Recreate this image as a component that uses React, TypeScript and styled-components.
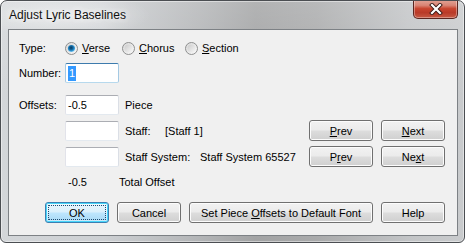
import React, { FC } from 'react';
import styled, { createGlobalStyle, css } from 'styled-components';

const GlobalStyle = createGlobalStyle`
	html, body {
		margin: 0;
		padding: 0;
		background: #ffffff;
	}
	body {
		font-family: 'Liberation Sans', Arial, sans-serif;
		font-size: 11px;
		color: #000;
	}
`;

const Window = styled.div`
	box-sizing: border-box;
	width: 465px;
	height: 243px;
	border: 1px solid #4b4e52;
	border-radius: 7px 7px 6px 6px;
	padding: 0 6px 6px 7px;
	display: flex;
	flex-direction: column;
	background:
		radial-gradient(ellipse 90px 22px at 60px 14px, rgba(255, 255, 255, 0.45), rgba(255, 255, 255, 0) 100%),
		linear-gradient(180deg, rgba(255, 255, 255, 0.18) 0%, rgba(255, 255, 255, 0) 40%),
		linear-gradient(90deg, #d3d6d9 0%, #cdd0d3 22%, #b4b6b8 42%, #a2a3a4 55%, #a9aaab 68%, #c2c4c6 88%, #c9cbcd 100%);
	box-shadow: inset 0 0 0 1px rgba(255, 255, 255, 0.45);
	overflow: hidden;
`;

const TitleBar = styled.div`
	height: 28px;
	display: flex;
	align-items: flex-start;
`;

const Title = styled.div`
	font-family: 'Liberation Sans', Arial, sans-serif;
	font-size: 12px;
	line-height: 28px;
	color: #111;
	text-shadow: 0 0 6px rgba(255, 255, 255, 0.95), 0 0 10px rgba(255, 255, 255, 0.7);
	padding-left: 1px;
`;

const CloseButton = styled.div`
	margin-left: auto;
	margin-top: -1px;
	width: 45px;
	height: 19px;
	box-sizing: border-box;
	border: 1px solid #5b2620;
	border-top: none;
	border-radius: 0 0 5px 5px;
	background: linear-gradient(
		180deg,
		#e2a497 0%,
		#d98474 30%,
		#c8452f 48%,
		#b93a28 70%,
		#c65a44 100%
	);
	box-shadow: inset 0 0 0 1px rgba(255, 255, 255, 0.35);
	display: flex;
	align-items: center;
	justify-content: center;
`;

const Client = styled.div`
	box-sizing: border-box;
	height: 207px;
	border: 1px solid #7d8185;
	background: #f0f0f0;
	padding: 11px 12px 0 10px;
	display: flex;
	flex-direction: column;
`;

const Row = styled.div<{ $top: number; $height: number }>`
	display: flex;
	align-items: center;
	height: ${(p) => p.$height}px;
	margin-top: ${(p) => p.$top}px;
`;

const Label = styled.span<{ $width?: number }>`
	white-space: nowrap;
	${(p) =>
		p.$width !== undefined &&
		css`
			width: ${p.$width}px;
			flex: none;
		`}
`;

const RadioItem = styled.label<{ $width?: number }>`
	display: flex;
	align-items: center;
	gap: 4px;
	white-space: nowrap;
	${(p) =>
		p.$width !== undefined &&
		css`
			width: ${p.$width}px;
			flex: none;
		`}
`;

const TextBox = styled.div<{ $focused?: boolean }>`
	box-sizing: border-box;
	width: 54px;
	height: 20px;
	flex: none;
	background: #fff;
	border: 1px solid;
	border-radius: 2px;
	border-color: ${(p) =>
		p.$focused ? '#3d7bad #a4c9e3 #b7d9ed #a4c9e3' : '#abadb3 #dbdfe6 #e3e9ef #e2e3ea'};
	padding: 0 0 0 2px;
	display: flex;
	align-items: center;
	line-height: 15px;
`;

const Selected = styled.span`
	background: #3399ff;
	color: #fff;
	padding: 0 1px;
`;

const Spacer = styled.div`
	margin-left: auto;
`;

const ButtonGroup = styled.div`
	display: flex;
	gap: 8px;
	margin-left: auto;
`;

const Button = styled.div<{ $width?: number; $default?: boolean }>`
	position: relative;
	box-sizing: border-box;
	width: ${(p) => p.$width ?? 64}px;
	height: 21px;
	flex: none;
	border: 1px solid #707070;
	border-radius: 3px;
	background: linear-gradient(180deg, #f2f2f2 0%, #ebebeb 49%, #dddddd 51%, #cfcfcf 100%);
	box-shadow: inset 0 0 0 1px #fcfcfc;
	display: flex;
	align-items: center;
	justify-content: center;
	white-space: nowrap;
	${(p) =>
		p.$default &&
		css`
			border-color: #3c7fb1;
			background: linear-gradient(180deg, #eaf6fd 0%, #d9f0fc 49%, #bee6fd 51%, #a7d9f5 100%);
			box-shadow: inset 0 0 0 1px #48d6fb, inset 0 0 0 2px rgba(255, 255, 255, 0.4);
			&::after {
				content: '';
				position: absolute;
				inset: 2px;
				border: 1px dotted #1f4a70;
				border-radius: 1px;
			}
		`}
`;

const Mn = styled.span`
	text-decoration: underline;
	text-underline-offset: 1px;
`;

const Radio: FC<{ id: string; checked?: boolean }> = ({ id, checked }) => (
	<svg width="13" height="13" viewBox="0 0 13 13">
		<defs>
			<linearGradient id={`ring-${id}`} x1="0" y1="0" x2="1" y2="1">
				<stop offset="0" stopColor="#d8d8d8" />
				<stop offset="1" stopColor="#fafafa" />
			</linearGradient>
			<linearGradient id={`in-${id}`} x1="0" y1="0" x2="1" y2="1">
				<stop offset="0" stopColor="#cbcbcb" />
				<stop offset="1" stopColor="#f7f7f7" />
			</linearGradient>
			<radialGradient id={`dot-${id}`} cx="0.45" cy="0.4" r="0.6">
				<stop offset="0" stopColor="#0b3a5e" />
				<stop offset="0.45" stopColor="#14679f" />
				<stop offset="0.8" stopColor="#3aa0dc" />
				<stop offset="1" stopColor="#9ed6f5" />
			</radialGradient>
		</defs>
		<circle cx="6.5" cy="6.5" r="6" fill={`url(#ring-${id})`} stroke="#8e8f8f" strokeWidth="1" />
		<circle cx="6.5" cy="6.5" r="4" fill={`url(#in-${id})`} />
		{checked && <circle cx="6.5" cy="6.5" r="3.6" fill={`url(#dot-${id})`} />}
	</svg>
);

const CloseIcon: FC = () => (
	<svg width="14" height="12" viewBox="0 0 14 12">
		<path d="M3 2 L11 10 M11 2 L3 10" stroke="#3a1a16" strokeWidth="4" strokeLinecap="square" />
		<path d="M3 2 L11 10 M11 2 L3 10" stroke="#ffffff" strokeWidth="2.2" strokeLinecap="square" />
	</svg>
);

const App: FC = () => {
	return (
		<>
			<GlobalStyle />
			<Window>
				<TitleBar>
					<Title>Adjust Lyric Baselines</Title>
					<CloseButton>
						<CloseIcon />
					</CloseButton>
				</TitleBar>
				<Client>
					<Row $top={0} $height={14}>
						<Label $width={46}>Type:</Label>
						<RadioItem $width={57}>
							<Radio id="verse" checked />
							<span>
								<Mn>V</Mn>erse
							</span>
						</RadioItem>
						<RadioItem $width={63}>
							<Radio id="chorus" />
							<span>
								<Mn>C</Mn>horus
							</span>
						</RadioItem>
						<RadioItem>
							<Radio id="section" />
							<span>
								<Mn>S</Mn>ection
							</span>
						</RadioItem>
					</Row>
					<Row $top={8} $height={20}>
						<Label $width={46}>Number:</Label>
						<TextBox $focused>
							<Selected>1</Selected>
						</TextBox>
					</Row>
					<Row $top={12} $height={20}>
						<Label $width={46}>Offsets:</Label>
						<TextBox>-0.5</TextBox>
						<Label style={{ marginLeft: 6 }}>Piece</Label>
					</Row>
					<Row $top={5} $height={21}>
						<Label $width={46} />
						<TextBox />
						<Label $width={40} style={{ marginLeft: 6 }}>
							Staff:
						</Label>
						<Label>[Staff 1]</Label>
						<ButtonGroup>
							<Button>
								<span>
									<Mn>P</Mn>rev
								</span>
							</Button>
							<Button>
								<span>
									<Mn>N</Mn>ext
								</span>
							</Button>
						</ButtonGroup>
					</Row>
					<Row $top={5} $height={21}>
						<Label $width={46} />
						<TextBox />
						<Label $width={75} style={{ marginLeft: 6 }}>
							Staff System:
						</Label>
						<Label>Staff System 65527</Label>
						<ButtonGroup>
							<Button>
								<span>
									P<Mn>r</Mn>ev
								</span>
							</Button>
							<Button>
								<span>
									Ne<Mn>x</Mn>t
								</span>
							</Button>
						</ButtonGroup>
					</Row>
					<Row $top={8} $height={14}>
						<Label $width={49} />
						<Label $width={51}>-0.5</Label>
						<Label>Total Offset</Label>
					</Row>
					<Row $top={13} $height={21}>
						<Spacer />
						<ButtonGroup>
							<Button $default>OK</Button>
							<Button>Cancel</Button>
							<Button $width={184}>
								<span>
									Set Piece <Mn>O</Mn>ffsets to Default Font
								</span>
							</Button>
							<Button>Help</Button>
						</ButtonGroup>
					</Row>
				</Client>
			</Window>
		</>
	);
};

export default App;
